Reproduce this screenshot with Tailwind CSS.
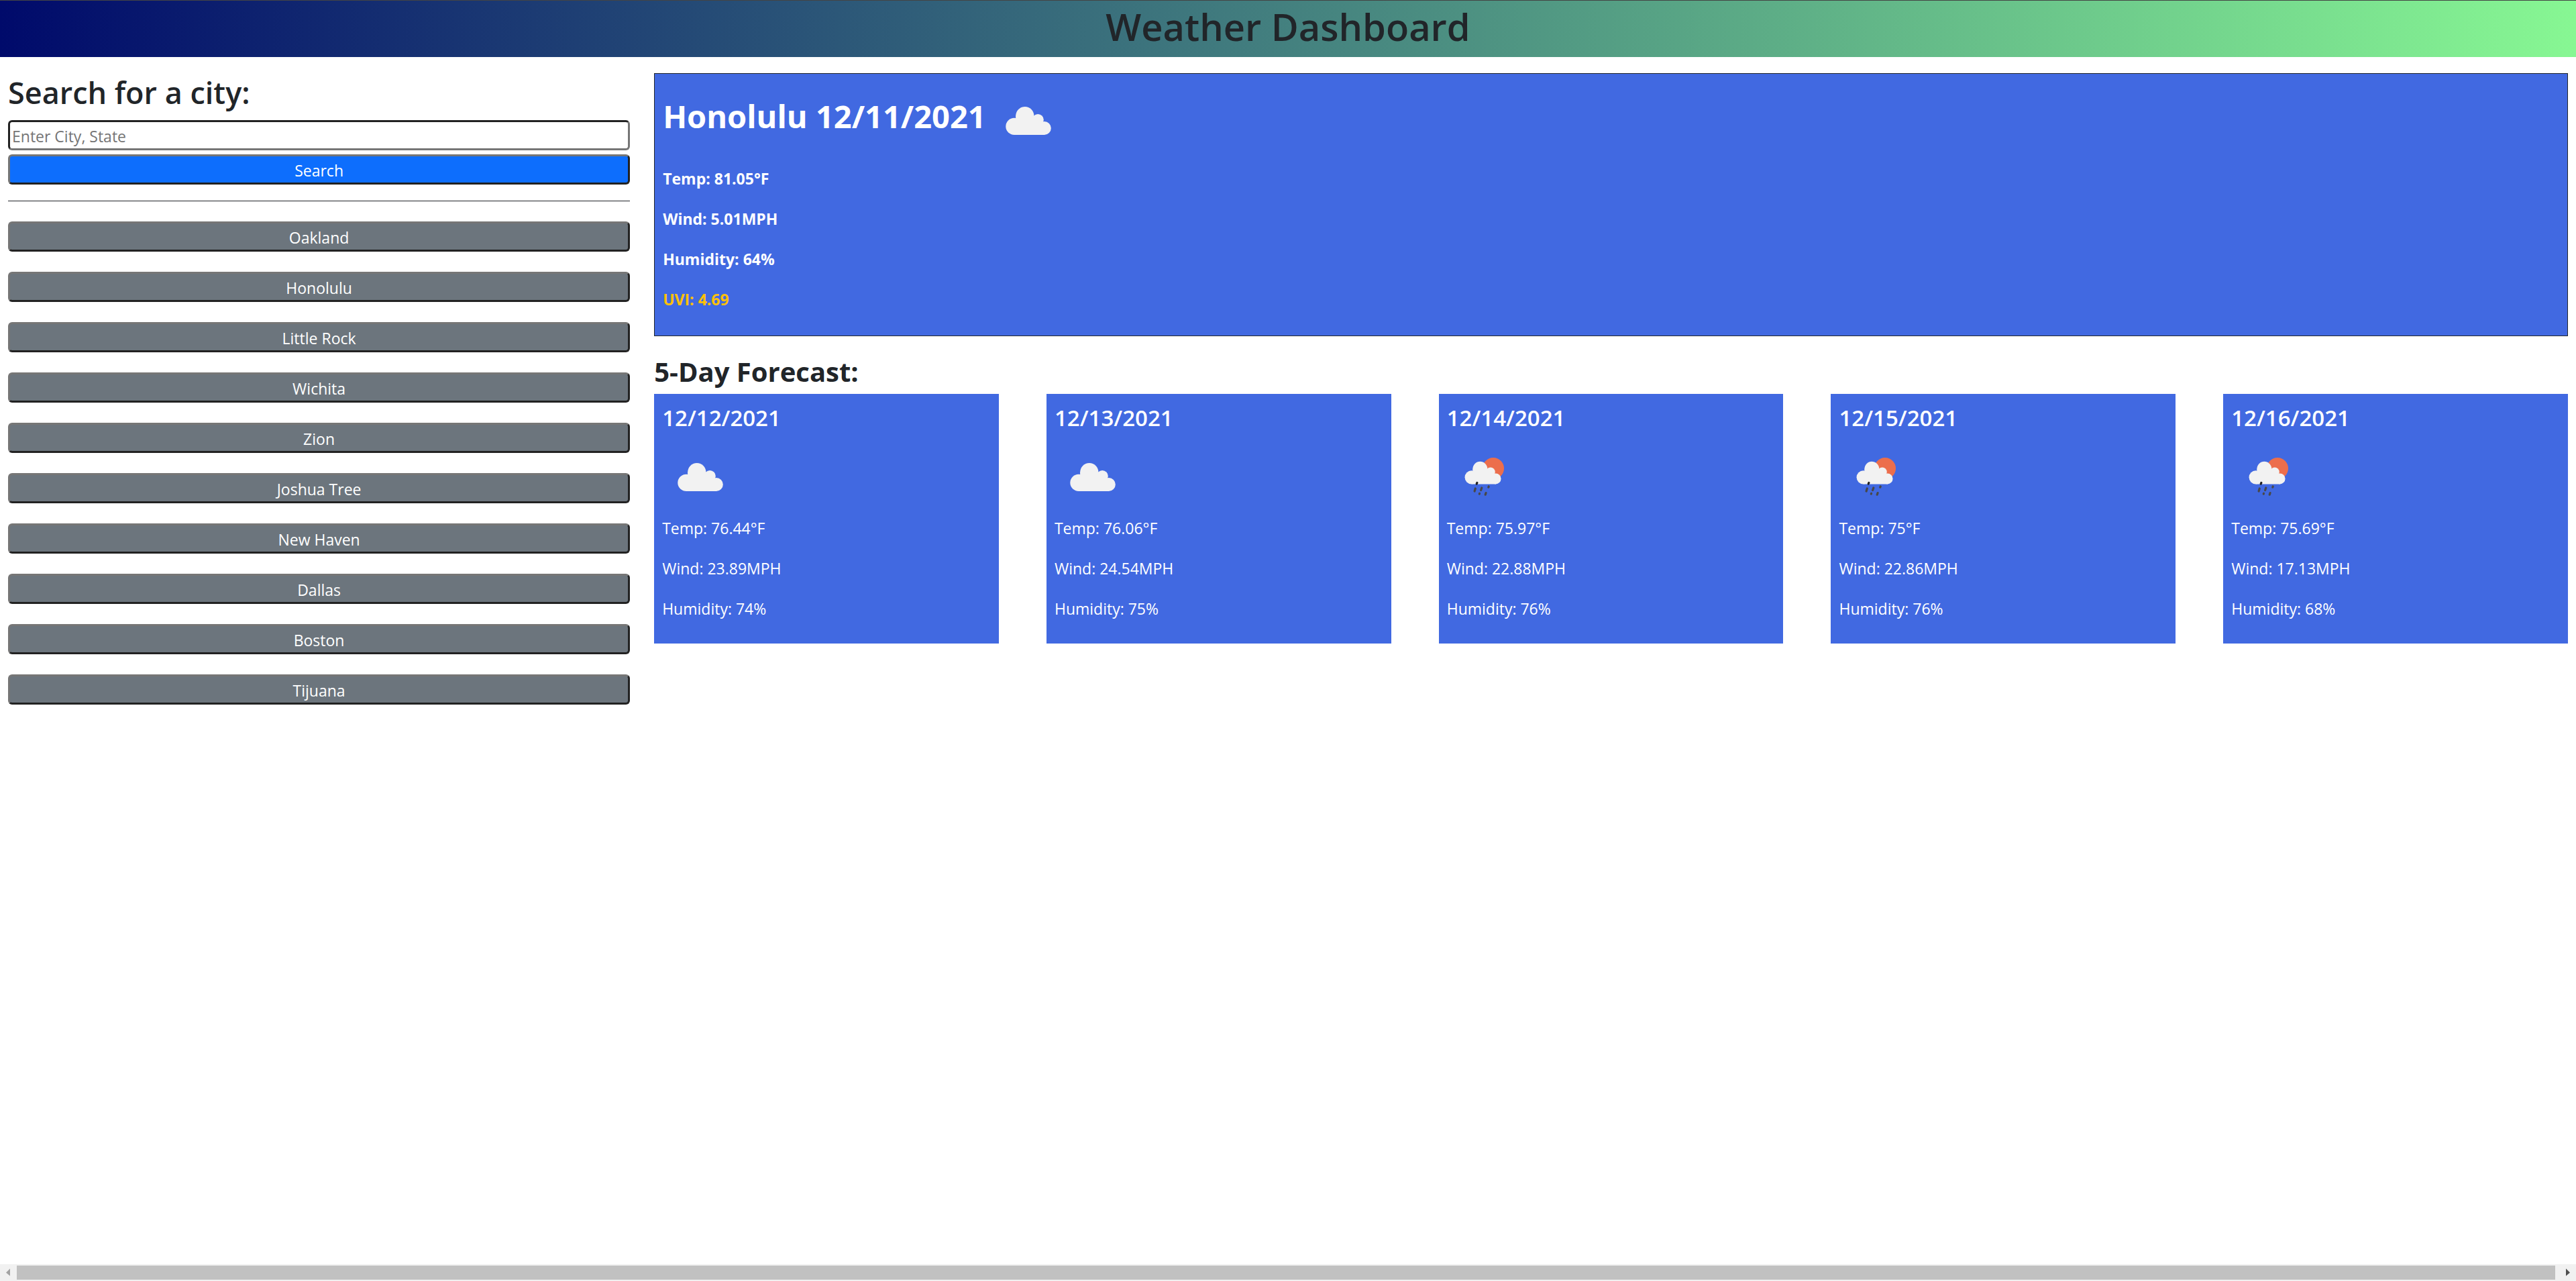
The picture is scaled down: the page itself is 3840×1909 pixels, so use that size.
<!DOCTYPE html>
<html lang="en">
<head>
<meta charset="utf-8">
<title>Weather Dashboard</title>
<script src="https://cdn.jsdelivr.net/npm/@tailwindcss/browser@4"></script>
</head>
<body class="flex min-h-screen flex-col bg-white font-['Open_Sans','Noto_Sans',sans-serif] text-[23px] leading-9 text-[#212529]">
<svg class="hidden" aria-hidden="true">
  <g id="cloud-shape">
    <circle cx="35.900" cy="65.400" r="12.600"/>
    <circle cx="51.800" cy="49.600" r="13.600"/>
    <circle cx="71.200" cy="55.600" r="8.600"/>
    <circle cx="80.800" cy="68" r="10"/>
    <path d="M36 54h2.200v-5l26 4 8 4 7 2 2 19H36z"/>
  </g>
  <symbol id="cloud" viewBox="0 0 103 91">
    <use href="#cloud-shape" fill="#f2f2f2"/>
  </symbol>
  <symbol id="rain" viewBox="0 0 103 91">
    <circle cx="69" cy="44" r="16" fill="#ec6e4c"/>
    <use href="#cloud-shape" fill="#f2f2f2" transform="translate(7.900 5) scale(.8)"/>
    <g stroke="#484848" stroke-width="3.200" stroke-linecap="round">
      <path stroke="#222" d="M44.900 65.400l-.7 1.800"/>
      <path d="M42.300 74l-1.200 4M51.800 73l-1.200 3.600M62.200 71l-.4 1.200M48.500 81.400l-.2.7M58.100 80.600l-.9 2.600"/>
    </g>
  </symbol>
</svg>

<header class="border-t border-[#444] bg-[linear-gradient(to_right,#000a6b,#87f793)] pb-3 text-center">
  <h1 class="pt-1 text-[56px] leading-[68px] font-semibold">Weather Dashboard</h1>
</header>

<main class="grid grow grid-cols-[13fr_40fr] items-start gap-9 px-3 pt-6">
  <aside>
    <form>
      <label for="city" class="mb-3 block text-[45px] leading-[58px] font-semibold">Search for a city:</label>
      <input id="city" type="text" placeholder="Enter City, State" class="mb-[6px] block h-[45px] w-full rounded-md border-3 border-t-[#222] border-r-[#767676] border-b-[#767676] border-l-[#222] px-[3px] pt-[2px] placeholder:text-[#757575]">
      <button type="button" class="block h-[45px] w-full rounded-md border-3 border-t-[#767676] border-r-[#222] border-b-[#222] border-l-[#767676] bg-[#0d6efd] pt-[3px] text-white">Search</button>
    </form>
    <hr class="my-6 border-[#212529]">
    <nav id="cities" class="flex flex-col gap-[30px] pt-[6px]" aria-label="Recent cities"></nav>
  </aside>

  <div>
    <section class="border border-[#212529] bg-[#4169e1] px-3 pt-[13px] pb-9 font-bold text-white">
      <h2 class="mb-[34px] flex items-center gap-[6px] text-[47px] leading-[58px]"><span class="pt-2">Honolulu 12/11/2021</span><svg class="h-[91px] w-[103px]"><use href="#cloud"/></svg></h2>
      <div class="flex flex-col gap-6">
        <p>Temp: 81.05°F</p>
        <p>Wind: 5.01MPH</p>
        <p>Humidity: 64%</p>
        <p class="text-[#ffc107]">UVI: 4.69</p>
      </div>
    </section>
    <h2 class="mt-6 mb-2 pt-1 text-[40px] leading-[50px] font-bold">5-Day Forecast:</h2>
    <section id="forecast" class="grid grid-cols-5 gap-[71px]"></section>
  </div>
</main>

<footer class="flex h-[25px] items-center justify-between bg-[#f1f1f1]">
  <svg class="h-[25px] w-[25px] shrink-0" viewBox="0 0 25 25"><path fill="#a3a3a3" d="M9 12.500l6-6v11z"/></svg>
  <div class="mr-[6px] h-[21px] grow bg-[#c1c1c1]"></div>
  <svg class="h-[25px] w-[25px] shrink-0" viewBox="0 0 25 25"><path fill="#505050" d="M16 12.500l-6-6v11z"/></svg>
</footer>

<script>
  const cities = ["Oakland", "Honolulu", "Little Rock", "Wichita", "Zion", "Joshua Tree", "New Haven", "Dallas", "Boston", "Tijuana"];
  document.getElementById("cities").innerHTML = cities.map(c =>
    `<button type="button" class="block h-[45px] w-full rounded-md border-3 border-t-[#767676] border-r-[#222] border-b-[#222] border-l-[#767676] bg-[#6c757d] pt-[3px] text-white">${c}</button>`).join("");

  const days = [
    ["12/12/2021", "cloud", "76.44", "23.89", 74],
    ["12/13/2021", "cloud", "76.06", "24.54", 75],
    ["12/14/2021", "rain", "75.97", "22.88", 76],
    ["12/15/2021", "rain", "75", "22.86", 76],
    ["12/16/2021", "rain", "75.69", "17.13", 68]
  ];
  document.getElementById("forecast").innerHTML = days.map(([date, icon, temp, wind, hum]) =>
    `<article class="bg-[#4169e1] px-3 pt-[14px] pb-[34px] text-white">
      <h3 class="mb-[10px] text-[33px] leading-[43px] font-semibold">${date}</h3>
      <svg class="mb-6 block h-[91px] w-[103px]"><use href="#${icon}"/></svg>
      <div class="flex flex-col gap-6"><p>Temp: ${temp}°F</p><p>Wind: ${wind}MPH</p><p>Humidity: ${hum}%</p></div>
    </article>`).join("");
</script>
</body>
</html>
